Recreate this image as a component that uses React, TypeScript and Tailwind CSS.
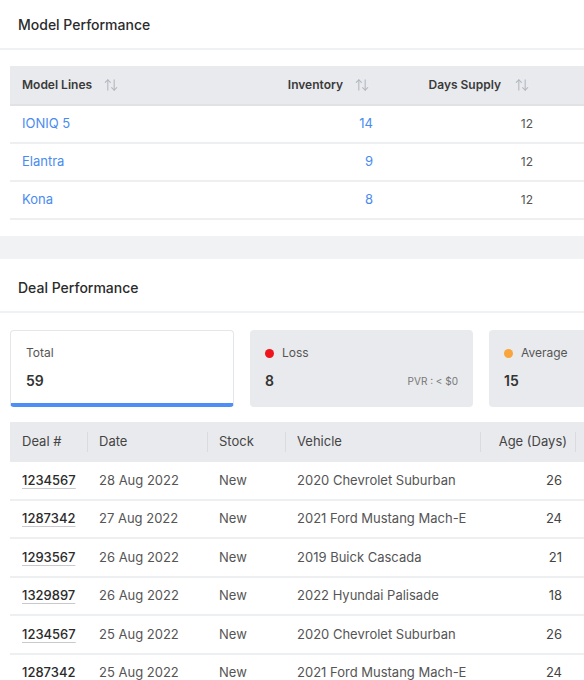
import React from "react";

const SortIcon = ({ ml = "ml-[11px]" }: { ml?: string }) => (
  <svg width="16" height="14" viewBox="0 0 24 22" fill="none" stroke="#b4b8bf" strokeWidth="1.7" strokeLinecap="round" strokeLinejoin="round" className={`${ml} shrink-0`}>
    <path d="m21 15-4 4-4-4" />
    <path d="M17 19V3" />
    <path d="m3 7 4-4 4 4" />
    <path d="M7 3v16" />
  </svg>
);

const models = [
  { name: "IONIQ 5", inv: "14", days: "12" },
  { name: "Elantra", inv: "9", days: "12" },
  { name: "Kona", inv: "8", days: "12" },
];

const deals = [
  { id: "1234567", date: "28 Aug 2022", stock: "New", vehicle: "2020 Chevrolet Suburban", age: "26" },
  { id: "1287342", date: "27 Aug 2022", stock: "New", vehicle: "2021 Ford Mustang Mach-E", age: "24" },
  { id: "1293567", date: "26 Aug 2022", stock: "New", vehicle: "2019 Buick Cascada", age: "21" },
  { id: "1329897", date: "26 Aug 2022", stock: "New", vehicle: "2022 Hyundai Palisade", age: "18" },
  { id: "1234567", date: "25 Aug 2022", stock: "New", vehicle: "2020 Chevrolet Suburban", age: "26" },
  { id: "1287342", date: "25 Aug 2022", stock: "New", vehicle: "2021 Ford Mustang Mach-E", age: "24" },
];

const Divider = () => <div className="w-px h-[20px] bg-[#d9dbdf] shrink-0" />;

export default function App() {
  return (
    <div className="w-[584px] h-[680px] overflow-hidden bg-white font-['Inter','Noto_Sans',sans-serif] text-[#333]">
      <div className="w-[760px]">
        {/* Model Performance */}
        <div className="h-[50px] pl-[18px] flex items-center border-b-2 border-[#f0f1f3] text-[14px] font-medium text-[#2b2b2b]">
          Model Performance
        </div>
        <div className="pl-[10px] pt-[16px] pb-[16px]">
          <div className="flex items-center h-[40px] bg-[#e9eaed] border-b-2 border-[#e0e2e5] text-[12px] font-semibold text-[#3a3a3a]">
            <div className="w-[263px] shrink-0 pl-[12px] flex items-center">Model Lines<SortIcon /></div>
            <div className="w-[112px] shrink-0 pr-[15px] flex items-center justify-end">Inventory<SortIcon /></div>
            <div className="w-[160px] shrink-0 pr-[15px] flex items-center justify-end">Days Supply<SortIcon ml="ml-[13px]" /></div>
          </div>
          {models.map((m) => (
            <div key={m.name} className="flex items-center h-[38px] border-b-2 border-[#eeeff1] text-[13px]">
              <div className="w-[263px] shrink-0 pl-[12px] text-[#4a8bf0]">{m.name}</div>
              <div className="w-[112px] shrink-0 pr-[12px] text-right text-[#4a8bf0]">{m.inv}</div>
              <div className="w-[160px] shrink-0 pr-[12px] text-right text-[#555] text-[12px]">{m.days}</div>
            </div>
          ))}
        </div>
        <div className="h-[23px] bg-[#f1f2f4]" />

        {/* Deal Performance */}
        <div className="h-[54px] pl-[18px] pt-[4px] flex items-center border-b-2 border-[#f0f1f3] text-[14px] font-medium text-[#2b2b2b]">
          Deal Performance
        </div>
        <div className="pl-[10px] pt-[17px] flex gap-[16px]">
          <div className="w-[224px] h-[77px] shrink-0 rounded-[4px] border border-[#e4e6e9] border-b-4 border-b-[#4f8ef7] bg-white pl-[15px] pt-[14px]">
            <div className="text-[12px] text-[#555] leading-[16px]">Total</div>
            <div className="mt-[11px] text-[14px] font-semibold text-[#333] leading-[18px]">59</div>
          </div>
          <div className="w-[223px] h-[77px] shrink-0 rounded-[4px] bg-[#e9eaed] pl-[15px] pr-[15px] pt-[15px]">
            <div className="flex items-center text-[12px] text-[#555] leading-[16px]">
              <span className="w-[9px] h-[9px] rounded-full bg-[#f0141e] mr-[8px]" />Loss
            </div>
            <div className="mt-[11px] flex items-center justify-between">
              <span className="text-[14px] font-semibold text-[#333] leading-[18px]">8</span>
              <span className="text-[10px] text-[#777]">PVR : &lt; $0</span>
            </div>
          </div>
          <div className="w-[224px] h-[77px] shrink-0 rounded-[4px] bg-[#e9eaed] pl-[15px] pr-[15px] pt-[15px]">
            <div className="flex items-center text-[12px] text-[#555] leading-[16px]">
              <span className="w-[9px] h-[9px] rounded-full bg-[#f8a53e] mr-[8px]" />Average
            </div>
            <div className="mt-[11px] flex items-center justify-between">
              <span className="text-[14px] font-semibold text-[#333] leading-[18px]">15</span>
            </div>
          </div>
        </div>

        <div className="pl-[10px] pt-[15px]">
          <div className="flex items-center h-[40px] bg-[#e9eaed] text-[13px] text-[#444]">
            <div className="w-[77px] shrink-0 pl-[12px]">Deal #</div>
            <Divider />
            <div className="w-[119px] shrink-0 pl-[11px]">Date</div>
            <Divider />
            <div className="w-[77px] shrink-0 pl-[11px]">Stock</div>
            <Divider />
            <div className="w-[194px] shrink-0 pl-[11px]">Vehicle</div>
            <Divider />
            <div className="w-[94px] shrink-0 pr-[8px] text-right">Age (Days)</div>
            <Divider />
            <div className="w-[100px] shrink-0" />
          </div>
          {deals.map((d, i) => (
            <div key={i} className="flex items-center h-[38.5px] border-b-2 border-[#eeeff1] text-[13px] text-[#555]">
              <div className="w-[77px] shrink-0 pl-[12px] font-medium text-[#2b2b2b] underline decoration-[#c8cacf] underline-offset-[3px]">{d.id}</div>
              <div className="w-[120px] shrink-0 pl-[12px]">{d.date}</div>
              <div className="w-[78px] shrink-0 pl-[12px]">{d.stock}</div>
              <div className="w-[195px] shrink-0 pl-[12px]">{d.vehicle}</div>
              <div className="w-[95px] shrink-0 pr-[13px] text-right text-[#444]">{d.age}</div>
            </div>
          ))}
        </div>
      </div>
    </div>
  );
}
